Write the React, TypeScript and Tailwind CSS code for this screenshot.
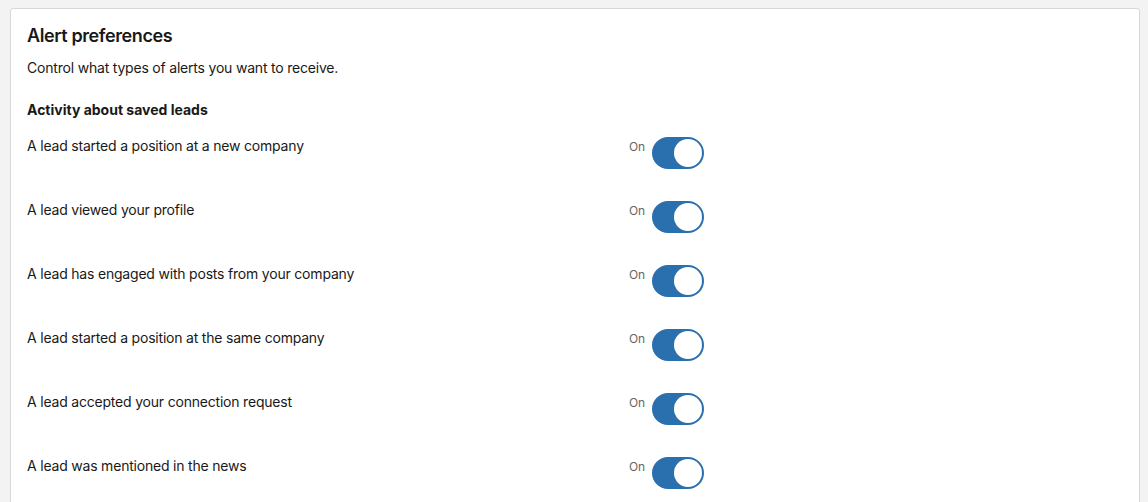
import { useState } from 'react';

const alerts = [
  'A lead started a position at a new company',
  'A lead viewed your profile',
  'A lead has engaged with posts from your company',
  'A lead started a position at the same company',
  'A lead accepted your connection request',
  'A lead was mentioned in the news',
];

function Toggle({ on, onChange }: { on: boolean; onChange: () => void }) {
  return (
    <button
      onClick={onChange}
      className={`relative block h-[32px] w-[52px] rounded-full border-2 ${on ? 'border-[#2a6fae] bg-[#2a6fae]' : 'border-[#666] bg-[#666]'}`}
    >
      <span
        className={`absolute top-[0px] h-[28px] w-[28px] rounded-full bg-white ${on ? 'left-[20px]' : 'left-[0px]'}`}
      />
    </button>
  );
}

export default function App() {
  const [state, setState] = useState<boolean[]>(alerts.map(() => true));

  return (
    <div
      className="min-h-screen bg-[#f3f3f3] pl-[10px] pr-[8px] pt-[8px] tracking-[-0.2px] text-[#191919]"
      style={{ fontFamily: 'Inter, "Noto Sans", sans-serif' }}
    >
      <div className="rounded-t-[3px] border border-[#d8d8d8] bg-white px-4 pb-8 pt-[15px]">
        <h1 className="text-[18px] leading-[24px] font-semibold tracking-[-0.4px]">Alert preferences</h1>
        <p className="mt-[10px] text-[14px] leading-[20px]">Control what types of alerts you want to receive.</p>
        <h2 className="mt-[22px] text-[14px] leading-[20px] font-bold tracking-[0px]">Activity about saved leads</h2>

        <div className="mt-4 flex flex-col gap-8">
          {alerts.map((label, i) => (
            <div key={label} className="flex h-[32px] items-start">
              <div className="w-[602px] flex-none text-[14px] leading-[20px]">{label}</div>
              <div className="flex items-start">
                <span className="mr-[7px] mt-[3px] text-[12px] leading-[16px] text-[#666]">
                  {state[i] ? 'On' : 'Off'}
                </span>
                <div className="mt-[1px] flex">
                  <Toggle
                    on={state[i]}
                    onChange={() => setState((s) => s.map((v, j) => (j === i ? !v : v)))}
                  />
                </div>
              </div>
            </div>
          ))}
        </div>
      </div>
    </div>
  );
}
